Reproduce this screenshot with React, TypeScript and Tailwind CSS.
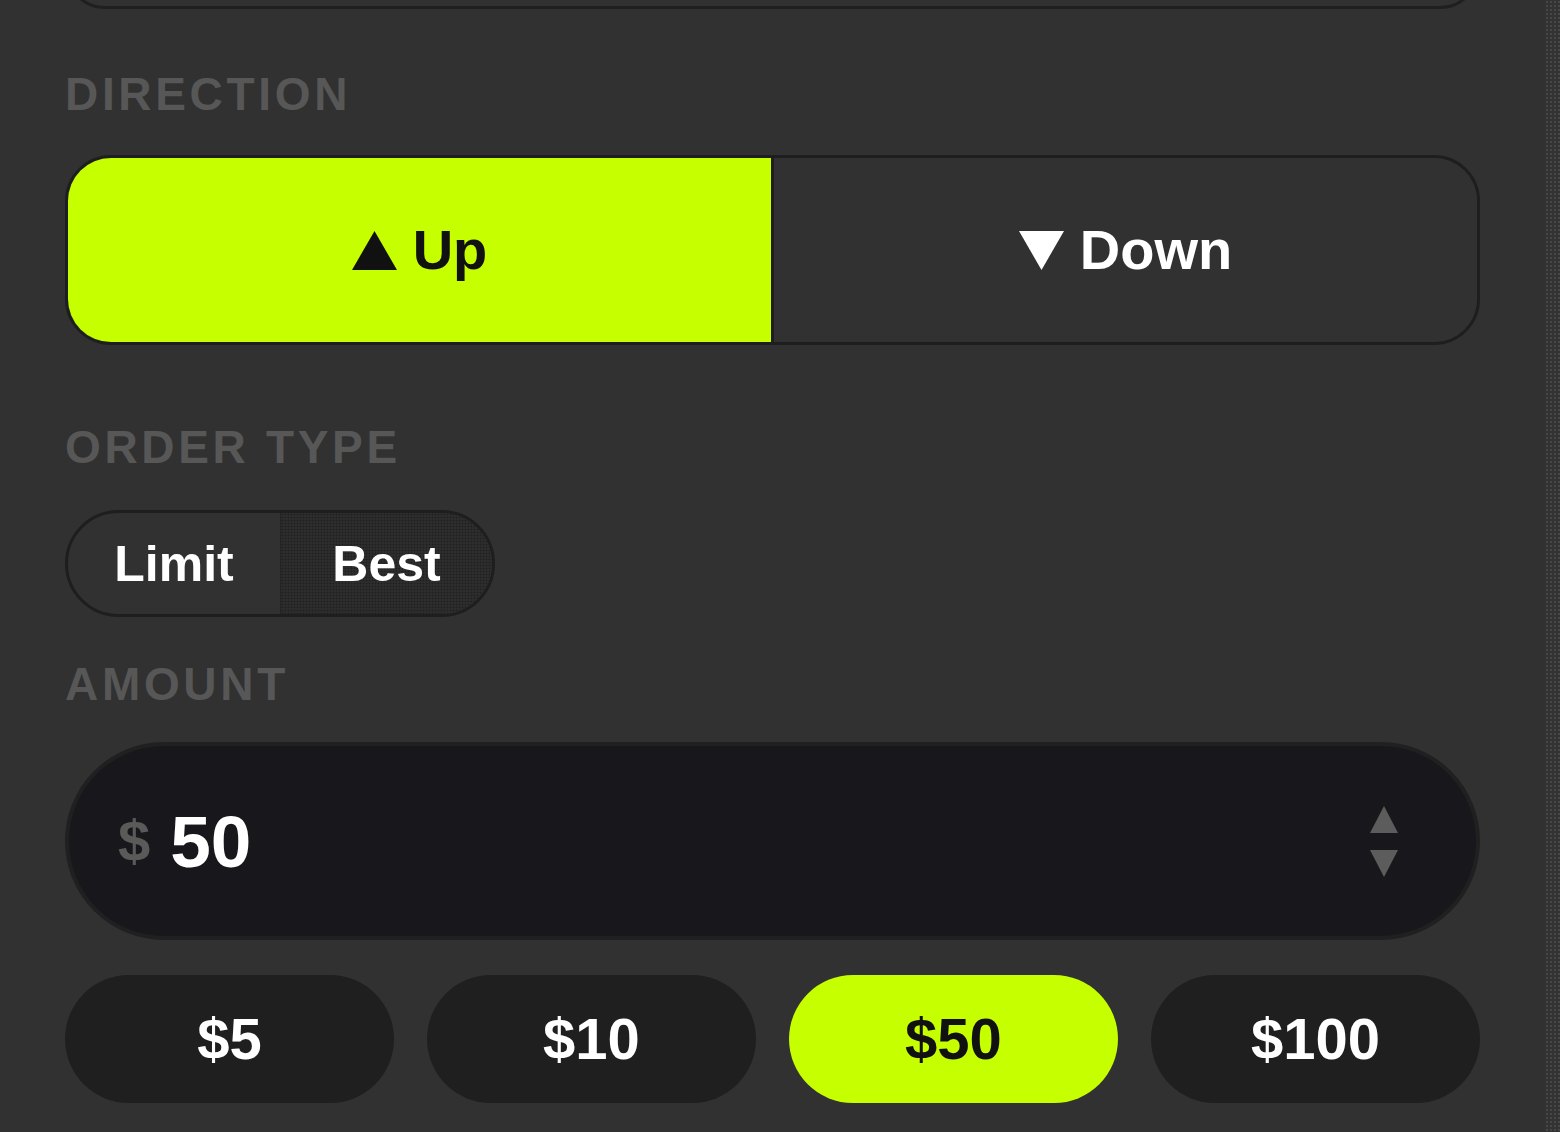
import React from "react";

const font = { fontFamily: '"Liberation Sans", Arial, sans-serif' };

function Tri({ down, color }: { down?: boolean; color: string }) {
  return (
    <svg width="45" height="39" viewBox="0 0 45 39" className="shrink-0">
      {down ? (
        <polygon points="0,0 45,0 22.5,39" fill={color} />
      ) : (
        <polygon points="22.5,0 45,39 0,39" fill={color} />
      )}
    </svg>
  );
}

function Label({ children }: { children: React.ReactNode }) {
  return (
    <div className="text-[46px] leading-none font-bold tracking-[0.08em] text-[#575757]">
      {children}
    </div>
  );
}

export default function App() {
  const amounts = ["$5", "$10", "$50", "$100"];
  const selected = "$50";
  return (
    <div style={font} className="flex h-[1132px] overflow-hidden bg-[#313131]">
      <div className="flex-1 px-[65px]">
        {/* bottom edge of panel above */}
        <div className="h-[80px] -mt-[71px] rounded-[69px] border-[3px] border-[#1f1f1f]" />

        <div className="mt-[62px]">
          <Label>DIRECTION</Label>
        </div>

        <div className="mt-[38px] flex h-[190px] overflow-hidden rounded-[46px] border-[3px] border-[#1e1e1e]">
          <button className="flex flex-1 items-center justify-center gap-[16px] bg-[#c6ff00] text-[56px] leading-none font-bold text-[#111111]">
            <Tri color="#111111" />
            <span>Up</span>
          </button>
          <div className="w-[3px] bg-[#1e1e1e]" />
          <button className="flex flex-1 items-center justify-center gap-[16px] bg-[#313131] text-[56px] leading-none font-bold text-white">
            <Tri down color="#ffffff" />
            <span>Down</span>
          </button>
        </div>

        <div className="mt-[79px]">
          <Label>ORDER TYPE</Label>
        </div>

        <div className="mt-[40px] flex h-[107px] w-[430px] overflow-hidden rounded-full border-[3px] border-[#1e1e1e]">
          <button className="flex w-[212px] items-center justify-center text-[50px] leading-none font-bold text-white">
            Limit
          </button>
          <div className="w-[1px] bg-[#232323]" />
          <button className="flex flex-1 items-center justify-center bg-[#2d2d2d] bg-[radial-gradient(circle,#1f1f1f_0.8px,transparent_1.1px)] bg-[length:3px_3px] text-[50px] leading-none font-bold text-white">
            Best
          </button>
        </div>

        <div className="mt-[44px]">
          <Label>AMOUNT</Label>
        </div>

        <div className="mt-[35px] flex h-[198px] items-center justify-between rounded-full border-[4px] border-[#202020] bg-[#18181c] pl-[49px] pr-[78px]">
          <div className="flex items-center gap-[20px]">
            <span className="text-[58px] leading-none font-bold text-[#5a5a5a]">$</span>
            <span className="text-[73px] leading-none font-bold text-white">50</span>
          </div>
          <div className="flex flex-col items-center gap-[17px]">
            <svg width="28" height="27" viewBox="0 0 28 27">
              <polygon points="14,0 28,27 0,27" fill="#5c5c5c" />
            </svg>
            <svg width="28" height="27" viewBox="0 0 28 27">
              <polygon points="0,0 28,0 14,27" fill="#5c5c5c" />
            </svg>
          </div>
        </div>

        <div className="mt-[35px] grid grid-cols-4 gap-[33px]">
          {amounts.map((a) => (
            <button
              key={a}
              className={
                a === selected
                  ? "flex h-[128px] items-center justify-center rounded-full bg-[#c6ff00] text-[58px] leading-none font-bold text-[#111111]"
                  : "flex h-[128px] items-center justify-center rounded-full bg-[#1f1f1f] text-[58px] leading-none font-bold text-white"
              }
            >
              {a}
            </button>
          ))}
        </div>
      </div>
      <div className="w-[15px] bg-[#333333] bg-[radial-gradient(circle,#474747_0.9px,transparent_1.2px)] bg-[length:4px_4px]" />
    </div>
  );
}
